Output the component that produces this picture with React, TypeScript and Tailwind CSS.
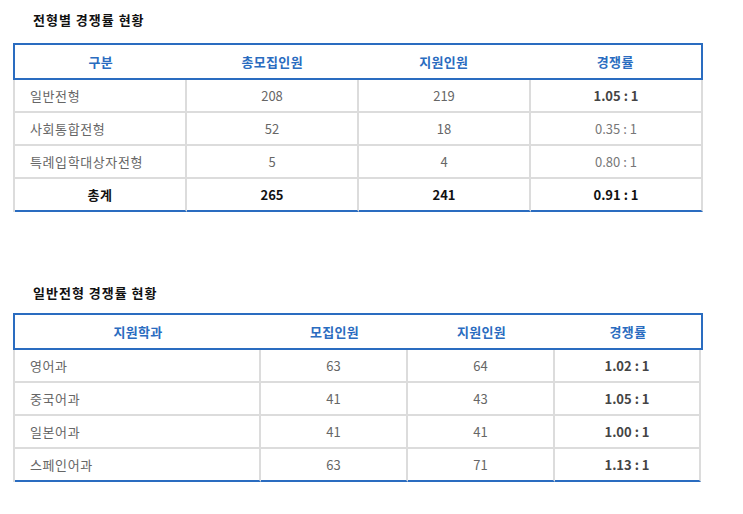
const font = { fontFamily: '"Noto Sans CJK KR", "Noto Sans", sans-serif' };

type Row = { name: string; a: string; b: string; rate: string; rateBold?: boolean; total?: boolean };

const typeRows: Row[] = [
  { name: "일반전형", a: "208", b: "219", rate: "1.05 : 1", rateBold: true },
  { name: "사회통합전형", a: "52", b: "18", rate: "0.35 : 1" },
  { name: "특례입학대상자전형", a: "5", b: "4", rate: "0.80 : 1" },
  { name: "총계", a: "265", b: "241", rate: "0.91 : 1", total: true },
];

const deptRows: Row[] = [
  { name: "영어과", a: "63", b: "64", rate: "1.02 : 1", rateBold: true },
  { name: "중국어과", a: "41", b: "43", rate: "1.05 : 1", rateBold: true },
  { name: "일본어과", a: "41", b: "41", rate: "1.00 : 1", rateBold: true },
  { name: "스페인어과", a: "63", b: "71", rate: "1.13 : 1", rateBold: true },
];

function Table({ heads, rows, cols }: { heads: string[]; rows: Row[]; cols: string }) {
  return (
    <div className="ml-[13px] w-[690px]">
      {/* header box */}
      <div className={`grid ${cols} h-[37px] items-center border-2 border-[#2a6cc0] text-[13px] font-bold text-[#2a6cc0]`}>
        {heads.map((h) => (
          <div key={h} className="text-center tracking-[0.3px]">
            {h}
          </div>
        ))}
      </div>
      {rows.map((r, i) => {
        const last = i === rows.length - 1;
        const rowBorder = last ? "border-b-2 border-b-[#2a6cc0]" : "border-b-2 border-b-[#dcdcdc]";
        const cell = `flex items-center border-r-2 border-r-[#dcdcdc] ${rowBorder}`;
        return (
          <div key={r.name} className={`grid ${cols} h-[33px] border-l-2 border-l-[#dcdcdc] text-[13px]`}>
            <div
              className={`${cell} tracking-[0.6px] ${
                r.total ? "justify-center font-bold text-[#111]" : "pl-[15px] text-[#666]"
              }`}
            >
              {r.name}
            </div>
            <div className={`${cell} justify-center ${r.total ? "font-bold text-[#111]" : "text-[#666]"}`}>{r.a}</div>
            <div className={`${cell} justify-center ${r.total ? "font-bold text-[#111]" : "text-[#666]"}`}>{r.b}</div>
            <div
              className={`${cell} justify-center whitespace-pre ${
                r.total ? "font-bold text-[#111]" : r.rateBold ? "font-bold text-[#444]" : "text-[#777]"
              }`}
            >
              {r.rate}
            </div>
          </div>
        );
      })}
    </div>
  );
}

export default function App() {
  return (
    <div className="min-h-[514px] w-[743px] bg-white pt-[10px]" style={font}>
      <h2 className="h-[20px] pl-[33px] text-[13px] font-bold leading-[20px] tracking-[1px] text-[#111]">
        전형별 경쟁률 현황
      </h2>
      <div className="mt-[13px]">
        <Table heads={["구분", "총모집인원", "지원인원", "경쟁률"]} rows={typeRows} cols="grid-cols-4" />
      </div>

      <h2 className="mt-[71px] h-[20px] pl-[33px] text-[13px] font-bold leading-[20px] tracking-[1px] text-[#111]">
        일반전형 경쟁률 현황
      </h2>
      <div className="mt-[10px]">
        <Table
          heads={["지원학과", "모집인원", "지원인원", "경쟁률"]}
          rows={deptRows}
          cols="grid-cols-[246px_147px_147px_146px]"
        />
      </div>
    </div>
  );
}
